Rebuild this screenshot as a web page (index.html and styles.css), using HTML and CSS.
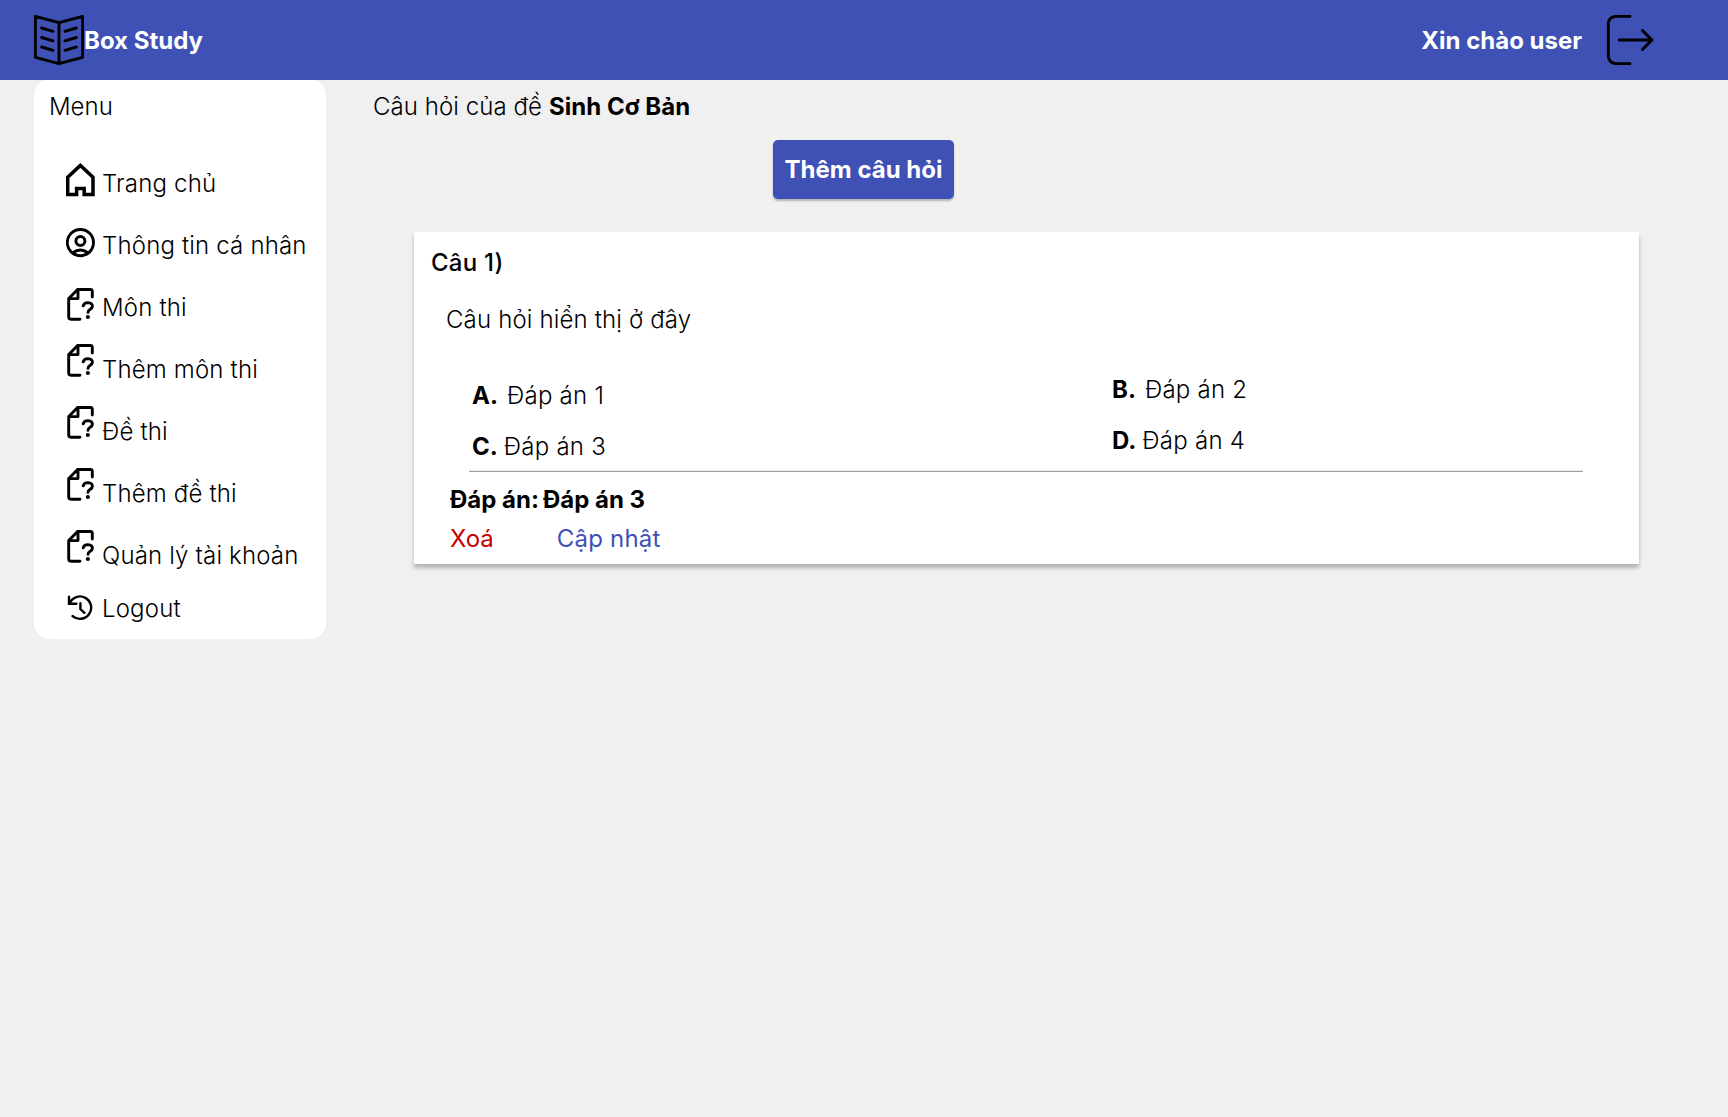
FILE: index.html
```html
<!DOCTYPE html>
<html lang="vi">
<head>
<meta charset="utf-8">
<title>Box Study</title>
<link rel="stylesheet" href="styles.css">
</head>
<body>
<svg class="symbols" aria-hidden="true">
  <symbol id="doc" viewBox="0 0 30 35">
    <path d="M11.6 2.5H24.4Q26.3 2.5 26.3 4.5V10M11.6 2.5L2.7 11.6V29.8Q2.7 32.2 5 32.2H14M12 2.5V11.6H2.7M17.2 18.8Q18 15.6 22 15.6Q26.4 15.8 26.4 19.3C26.4 22.6 22 22 22 25.4" fill="none" stroke="#000" stroke-width="2.9" stroke-linecap="round" stroke-linejoin="round"/>
    <circle cx="21.9" cy="30" r="2.1"/>
  </symbol>
</svg>
<header class="topbar">
  <div class="brand">
    <svg class="icon-lg" viewBox="0 0 50 50"><path d="M1.4 1.4L25 7.6L48.6 1.4V42.3L25 48.6L1.4 42.3ZM25 7.6V48.6M7.7 13L19 16.3M7.7 22.5L19 25.8M7.7 32L19 35.3M42.3 13L31 16.3M42.3 22.5L31 25.8M42.3 32L31 35.3"/></svg>
    <span>Box Study</span>
  </div>
  <div class="account">
    <span>Xin chào user</span>
    <svg class="icon-lg" viewBox="0 0 50 50"><path d="M24 1.3H11Q2.3 1.3 2.3 9.5V40.5Q2.3 48.6 11 48.6H24M13.2 25H46M36.6 15.6L46 25L36.6 34.4"/></svg>
  </div>
</header>
<div class="page">
  <nav class="sidebar">
    <div class="sidebar-title">Menu</div>
    <ul class="menu">
      <li><svg class="icon icon-home" viewBox="0 0 30 35"><path d="M14.4 3.4L1.7 15.2V32.6H10.6V26.4H18.2V32.6H27V15.2Z" stroke-width="3.5"/></svg><span>Trang chủ</span></li>
      <li><svg class="icon icon-user" viewBox="0 0 30 35"><g stroke-width="2.9"><circle cx="14.4" cy="15.6" r="13.1"/><circle cx="14.4" cy="14" r="4.5"/><path d="M6.6 26Q14.4 20 22.2 26"/></g></svg><span>Thông tin cá nhân</span></li>
      <li><svg class="icon icon-first" viewBox="0 0 30 35"><use href="#doc" class="glyph"/></svg><span>Môn thi</span></li>
      <li><svg class="icon" viewBox="0 0 30 35"><use href="#doc" class="glyph"/></svg><span>Thêm môn thi</span></li>
      <li><svg class="icon" viewBox="0 0 30 35"><use href="#doc" class="glyph"/></svg><span>Đề thi</span></li>
      <li><svg class="icon" viewBox="0 0 30 35"><use href="#doc" class="glyph"/></svg><span>Thêm đề thi</span></li>
      <li><svg class="icon" viewBox="0 0 30 35"><use href="#doc" class="glyph"/></svg><span>Quản lý tài khoản</span></li>
      <li class="logout"><svg class="icon" viewBox="0 0 30 35"><path d="M3 1.8V8.7H10.4M3.6 8.4A11.2 11.2 0 1 1 6.6 21.1M14.4 8.2V14L18.4 17.8" stroke-width="2.4" stroke-linecap="round"/></svg><span>Logout</span></li>
    </ul>
  </nav>
  <main class="content">
    <h1 class="heading">Câu hỏi của đề <b>Sinh Cơ Bản</b></h1>
    <button class="add">Thêm câu hỏi</button>
    <section class="card">
      <h2 class="number">Câu 1)</h2>
      <p class="question">Câu hỏi hiển thị ở đây</p>
      <div class="answers">
        <div class="column">
          <div class="answer wide"><b>A.</b><span>Đáp án 1</span></div>
          <div class="answer"><b>C.</b><span>Đáp án 3</span></div>
        </div>
        <div class="column raised">
          <div class="answer wide"><b>B.</b><span>Đáp án 2</span></div>
          <div class="answer"><b>D.</b><span>Đáp án 4</span></div>
        </div>
      </div>
      <div class="correct"><span>Đáp án:</span><span>Đáp án 3</span></div>
      <div class="actions"><a class="delete">Xoá</a><a class="update">Cập nhật</a></div>
    </section>
  </main>
</div>
</body>
</html>
```
FILE: styles.css
```css
* { box-sizing: border-box; }
body {
  margin: 0;
  min-height: 100vh;
  background: #f0f0f0;
  color: #000;
  font: 300 24px/29px Inter, "Liberation Sans", sans-serif;
}
b { font-weight: 700; }
.symbols { display: none; }

.topbar {
  display: flex;
  justify-content: space-between;
  align-items: center;
  height: 80px;
  padding: 0 72px 0 34px;
  background: #3f51b5;
  color: #fff;
  font-weight: 700;
}
.brand, .account { display: flex; align-items: center; }
.account { gap: 24px; }
.icon-lg {
  width: 50px;
  height: 50px;
  fill: none;
  stroke: #000;
  stroke-width: 2.9;
  stroke-linecap: round;
  stroke-linejoin: round;
}

.page { display: flex; align-items: flex-start; }
.sidebar {
  width: 292px;
  height: 559px;
  margin-left: 34px;
  padding-top: 12px;
  border-radius: 15px;
  background: #fff;
}
.sidebar-title { padding-left: 15px; }
.menu { margin: 36px 0 0; padding: 0 0 0 32px; list-style: none; }
.menu li { display: flex; gap: 6px; height: 62px; white-space: nowrap; letter-spacing: .17px; }
.menu span { padding-top: 12px; }
.icon { flex: none; width: 30px; height: 35px; fill: none; stroke: #000; }
.glyph { fill: #000; stroke: none; }
.icon-home { margin-top: 5px; }
.icon-user { margin-top: 8px; }
.icon-first { margin-top: 6px; }
.menu .logout { height: 44px; }
.logout .icon { margin-top: 4px; }
.logout span { padding-top: 3px; }

.content { width: 1313px; padding: 12px 0 0 46px; }
.heading { margin: 0 0 0 1px; font: inherit; letter-spacing: .07px; }
.add {
  display: block;
  width: 181px;
  height: 59px;
  margin: 19px 0 33px 401px;
  padding: 0;
  border: 0;
  border-radius: 5px;
  background: #3f51b5;
  color: #fff;
  font: 700 24px/29px Inter, "Liberation Sans", sans-serif;
  white-space: nowrap;
  box-shadow: 0 2px 2px rgba(0, 0, 0, .25);
}
.card {
  width: 1225px;
  height: 332px;
  margin-left: 42px;
  padding-top: 16px;
  background: #fff;
  box-shadow: 0 4px 4px rgba(0, 0, 0, .25);
}
.number { margin: 0 0 28px 17px; font: inherit; font-weight: 500; letter-spacing: .25px; }
.question { margin: 0 0 42px 32px; letter-spacing: .15px; }
.answers {
  display: grid;
  grid-template-columns: 640px 1fr;
  width: 1114px;
  height: 96px;
  margin-left: 55px;
  padding: 5px 0 0 3px;
  border-bottom: 1px solid #a0a0a0;
  box-shadow: inset 0 -1px #ececec;
}
.column { display: flex; flex-direction: column; gap: 22px; }
.raised { margin-top: -6px; }
.answer { display: flex; gap: 6px; }
.answer.wide { gap: 9px; }
.answer span { letter-spacing: .25px; }
.correct { display: flex; gap: 4px; margin: 13px 0 10px 36px; font-weight: 700; }
.actions { display: flex; gap: 63px; margin-left: 36px; font-weight: 400; }
.delete { color: #c40000; }
.update { color: #3f51b5; letter-spacing: .2px; }
```
